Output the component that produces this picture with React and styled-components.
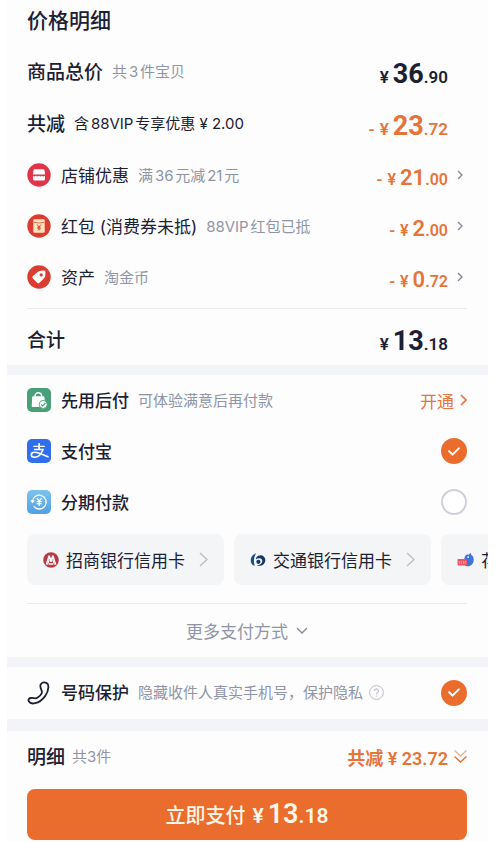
import React, { useState } from 'react';
import styled, { createGlobalStyle } from 'styled-components';

const colors = {
	text: '#1b2032',
	muted: '#8f95a6',
	orange: '#e5743a',
	accent: '#ea6d2d',
	band: '#f2f4f7',
	line: '#e9eaee',
};

const GlobalStyle = createGlobalStyle`
	*{
		box-sizing: border-box;
	}
	body{
		margin: 0;
		background: #fff;
		color: ${colors.text};
		font-family: Inter, "Noto Sans CJK SC", sans-serif;
		text-autospace: normal;
	}
	button{
		margin: 0;
		padding: 0;
		border: 0;
		background: none;
		color: inherit;
		font: inherit;
		cursor: pointer;
	}
	svg{
		display: block;
		flex: none;
	}
`;

const Sheet = styled.main`
	margin: 0 12px 0 7px;
	padding-bottom: 2px;
	background: #fdfdfe;
`;
const Section = styled.section`
	padding: 0 21px 0 20px;
`;
const Band = styled.div`
	height: ${({ $tall }) => ($tall ? 12 : 10)}px;
	background: ${colors.band};
`;
const Divider = styled.hr`
	height: 1px;
	margin: ${({ $space }) => $space || '0'};
	border: 0;
	background: ${colors.line};
`;
const Title = styled.h1`
	margin: 0;
	padding: 5px 0 9px;
	font-size: 21px;
	line-height: 32px;
	font-weight: 500;
`;
const Row = styled.div`
	display: flex;
	align-items: center;
	height: ${({ $tall }) => ($tall ? 52 : 51)}px;
	padding-bottom: 1px;
	white-space: nowrap;
`;
const Heading = styled.span`
	padding-bottom: 2px;
	font-size: 19px;
	font-weight: 500;
`;
const Name = styled.span`
	margin-left: 10px;
	padding-bottom: 2px;
	font-size: 17px;
	font-weight: ${({ $strong }) => ($strong ? 500 : 400)};
`;
const NameLabel = styled(Name).attrs({ as: 'label' })``;
const Hint = styled.span`
	margin-left: ${({ $close }) => ($close ? 7 : 9)}px;
	padding-bottom: 2px;
	font-size: 15px;
	color: ${({ $dark }) => ($dark ? colors.text : colors.muted)};
	text-autospace: ${({ $close }) => ($close ? 'no-autospace' : 'normal')};
`;
const End = styled.div`
	display: flex;
	align-items: center;
	margin-left: auto;
`;
const Amount = styled.span`
	display: flex;
	align-items: baseline;
	padding-top: 7px;
	color: ${({ $dark }) => ($dark ? colors.text : colors.orange)};
	font-family: Roboto, "Noto Sans CJK SC", sans-serif;
	font-size: ${({ $large }) => ($large ? 17 : 16)}px;
	line-height: 32px;
	font-weight: 600;
	b{
		margin-left: 4px;
		font-size: ${({ $large }) => ($large ? 27 : 22)}px;
		font-weight: ${({ $large }) => ($large ? 700 : 600)};
	}
`;
const Minus = styled.span`
	margin-right: 5px;
`;
const ArrowSlot = styled.span`
	display: flex;
	justify-content: flex-end;
	width: 19px;
	padding-right: 4px;
`;
const ArrowButton = styled(ArrowSlot).attrs({ as: 'button', type: 'button' })``;
const OpenLink = styled.a`
	display: flex;
	align-items: center;
	gap: 6px;
	margin-left: auto;
	color: ${colors.orange};
	font-size: 17px;
	text-decoration: none;
`;
const Tick = styled.span`
	display: grid;
	place-items: center;
	margin-left: auto;
	input{
		grid-area: 1 / 1;
		appearance: none;
		width: 26px;
		height: 26px;
		margin: 0;
		border: 2px solid #cfcfdb;
		border-radius: 50%;
		background: #fff;
	}
	input:checked{
		border-color: ${colors.accent};
		background: ${colors.accent};
	}
	svg{
		grid-area: 1 / 1;
		z-index: 1;
		pointer-events: none;
	}
`;
const Banks = styled.div`
	display: flex;
	gap: 10px;
	margin-top: 6px;
	padding-left: 20px;
	overflow-x: auto;
	scrollbar-width: none;
`;
const Bank = styled.button`
	display: flex;
	flex: none;
	align-items: center;
	height: 51px;
	padding: 0 16px;
	border-radius: 8px;
	background: #f3f5f7;
	font-size: 17px;
	white-space: nowrap;
	span{
		margin: 0 14px 0 7px;
	}
`;
const More = styled.button`
	display: flex;
	align-items: center;
	justify-content: center;
	gap: 8px;
	width: 100%;
	height: 53px;
	color: ${colors.muted};
	font-size: 17px;
`;
const HelpButton = styled.button`
	margin-left: 6px;
`;
const Saved = styled.button`
	display: flex;
	align-items: center;
	gap: 6px;
	margin-left: auto;
	color: ${colors.orange};
	font-family: Roboto, "Noto Sans CJK SC", sans-serif;
	font-size: 18px;
	font-weight: 600;
`;
const PayButton = styled.button`
	display: flex;
	align-items: baseline;
	justify-content: center;
	width: 100%;
	height: 51px;
	margin-top: 6px;
	border-radius: 8px;
	background: ${colors.accent};
	color: #fff6e6;
	font-size: 20px;
	line-height: 51px;
	font-weight: 500;
`;
const PayAmount = styled.span`
	margin-left: 7px;
	font-family: Roboto, sans-serif;
	font-size: 21px;
	font-weight: 600;
	b{
		margin-left: 4px;
		font-size: 27px;
		font-weight: 600;
	}
`;

const Chevron = ({ width = 6, height = 10, stroke = '#858a99', weight = 1.4 }) => (
	<svg width={width} height={height} viewBox={`0 0 ${width} ${height}`} fill="none" stroke={stroke} strokeWidth={weight}>
		<path d={`M1 1L${width - 1} ${height / 2}L1 ${height - 1}`} />
	</svg>
);
const DownIcon = () => (
	<svg width="12" height="7" viewBox="0 0 12 7" fill="none" stroke="#858b9b" strokeWidth="1.4">
		<path d="M1 1l5 5 5-5" />
	</svg>
);
const DoubleDownIcon = () => (
	<svg width="13" height="15" viewBox="0 0 13 15" fill="none" stroke={colors.orange} strokeWidth="1.5">
		<path d="M.5 1.5l6 5.5 6-5.5" opacity=".55" />
		<path d="M.5 7.5l6 5.5 6-5.5" />
	</svg>
);
const ShopIcon = () => (
	<svg width="24" height="24" viewBox="0 0 24 24">
		<circle cx="12" cy="12" r="11.7" fill="#e03549" />
		<path d="M8 6.200h8a1.600 1.600 0 0 1 1.600 1.400l.4 3.900H6l.4-3.900A1.600 1.600 0 0 1 8 6.200z" fill="#fff" />
		<path d="M6 12.800q1.500 1.400 3 0 1.500 1.400 3 0 1.500 1.400 3 0 1.500 1.400 3 0V16a1.500 1.500 0 0 1-1.500 1.500h-9A1.500 1.500 0 0 1 6 16z" fill="#fff" />
	</svg>
);
const PacketIcon = () => (
	<svg width="24" height="24" viewBox="0 0 24 24">
		<circle cx="12" cy="12" r="11.7" fill="#dc3d33" />
		<rect x="6.300" y="5.300" width="11.400" height="13.400" rx="1.200" fill="#fde3bd" />
		<path d="M6.300 8.200q5.700 1.600 11.400 0" fill="none" stroke="#dc6a45" strokeWidth=".9" />
		<path d="M10 10.500l2 2.500 2-2.500M12 13v3.500M10.300 13.300h3.400M10.300 14.900h3.400" fill="none" stroke="#d9452f" strokeWidth="1" />
	</svg>
);
const TagIcon = () => (
	<svg width="24" height="24" viewBox="0 0 24 24">
		<circle cx="12" cy="12" r="11.7" fill="#dc3d33" />
		<path d="M12.600 5.900l4.200-.4a1.600 1.600 0 0 1 1.700 1.700l-.4 4.300a2 2 0 0 1-.6 1.200l-5 5a1.600 1.600 0 0 1-2.300 0l-4.300-4.300a1.600 1.600 0 0 1 0-2.300l5.500-4.600a2 2 0 0 1 1.200-.6z" fill="#fff" />
		<circle cx="14.200" cy="9.900" r="1.600" fill="#dc3d33" />
	</svg>
);
const BagIcon = () => (
	<svg width="24" height="24" viewBox="0 0 24 24">
		<rect width="24" height="24" rx="5" fill="#48a078" />
		<path d="M8 8.800V8a3.300 3.300 0 0 1 6.600 0v.8" fill="none" stroke="#fff" strokeWidth="1.400" />
		<path d="M6.200 8.200h10.200a1 1 0 0 1 1 .9l.9 8.800a1 1 0 0 1-1 1.100H5.700a1 1 0 0 1-1-1.100l.5-8.800a1 1 0 0 1 1-.9z" fill="#fff" />
		<circle cx="16.200" cy="16.400" r="4" fill="#fff" stroke="#48a078" strokeWidth=".9" />
		<path d="M14.200 16.400l1.500 1.500 2.800-2.900" fill="none" stroke="#48a078" strokeWidth="1.200" />
	</svg>
);
const AlipayIcon = () => (
	<svg width="24" height="24" viewBox="0 0 24 24">
		<rect width="24" height="24" rx="5" fill="#2f6fed" />
		<g fill="none" stroke="#fff" strokeLinecap="round">
			<path d="M12.100 4.800v5.500" strokeWidth="1.700" />
			<path d="M6.800 7.300h10.700M7.400 10.500h8.600" strokeWidth="1.300" />
			<path d="M16 10.500c-1.500 4.200-4.600 7.700-8.500 7.700-2 0-3.200-1-3.200-2.500 0-1.600 1.500-2.500 3.300-2.500 3.700 0 8.600 2.600 13.400 4.600" strokeWidth="1.600" />
		</g>
	</svg>
);
const InstallmentIcon = () => (
	<svg width="24" height="24" viewBox="0 0 24 24">
		<defs>
			<linearGradient id="installment" x1="0" y1="0" x2="0" y2="1">
				<stop offset="0" stopColor="#7cc3ec" />
				<stop offset="1" stopColor="#519fe3" />
			</linearGradient>
		</defs>
		<rect width="24" height="24" rx="5" fill="url(#installment)" />
		<path d="M5.400 11.500a6.900 6.900 0 1 1 1.500 4.900" fill="none" stroke="#fff" strokeWidth="1.400" />
		<path d="M3.200 10.200l2.200 3.100 2.500-2.700z" fill="#fff" />
		<path d="M9.900 8.200l2.300 3 2.300-3M12.200 11.200v4.900M9.700 11.600h5M9.700 13.700h5" fill="none" stroke="#fff" strokeWidth="1.300" />
	</svg>
);
const PhoneIcon = () => (
	<svg width="24" height="24" viewBox="0 0 24 24" fill="none" stroke={colors.text} strokeWidth="1.800" strokeLinejoin="round">
		<path d="M13.800 3.200C15 1.600 17.500 1 19.400 1.900c1.500.7 2.100 2.300 2 4.300-.2 3.200-1.300 6.200-3.300 8.900-2.500 3.400-6 6.200-10 7.100-2.600.6-5.300-.1-6.300-1.900-.8-1.500.1-2.900 1.800-3.300 1.200-.3 2.400-.1 3.500.2 1.300.3 2.300.2 3.600-.6 1.600-1 3-2.400 3.800-4 .6-1.200.5-2.200 0-3.400-.9-2-1.900-4.100-.7-6z" />
	</svg>
);
const CmbIcon = () => (
	<svg width="16" height="16" viewBox="0 0 16 16">
		<circle cx="8" cy="8" r="7.800" fill="#b83a46" />
		<path d="M3.800 12.800H2.600L5.400 3.500h1.500L8 6.700l1.100-3.200h1.500l2.800 9.300h-1.200L10 6.500 8.600 10H7.400L6 6.500zM5.600 12.700l.5-1.400h3.800l.5 1.400z" fill="#fff" />
		<path d="M6 6.500L3.800 12.600h1.300l1.500-4.200zM10 6.500l2.200 6.100h-1.300L9.400 8.400z" fill="#fff" />
	</svg>
);
const BocomIcon = () => (
	<svg width="16" height="16" viewBox="0 0 16 16">
		<path d="M6.200 1.200C2.300 2.600.3 5.800.8 9.500c.3 2.300 1.600 3.900 4 4.300C3.300 10 3.700 5.300 6.200 1.200z" fill="#1d4f86" />
		<path d="M6.300 5.600C8 3.200 11.500 2.600 13.700 4.400c2.400 2 2 6-.4 8-1.900 1.600-4.800 1.900-6.700.8 3 .1 5.400-1.400 5.700-3.800.2-1.900-1.100-3.100-2.800-3.200-1.300-.1-2.600.4-3.700 1.400z" fill="#17376b" />
		<circle cx="8.400" cy="9.800" r="2.100" fill="#17376b" />
	</svg>
);
const HuabeiIcon = () => (
	<svg width="17" height="16" viewBox="0 0 17 16">
		<path d="M8.300 3.800c1.200-1.400 2.500-1.600 3.500-1.100L13.400.8l.8 2c1.700 1 2.600 2.700 2.500 5.100-.1 3.700-2.700 6.300-5.900 6.300-2.600 0-4.600-1.600-4.600-4.500z" fill="#3f73e0" />
		<circle cx="11.200" cy="5.200" r=".9" fill="#fff" />
		<rect x=".5" y="7" width="9.600" height="6.400" rx=".8" fill="#ec5563" />
		<path d="M2.300 9v2.700M4.300 9v2.700M6.300 9v2.700M8.200 9v2.700" stroke="#f9b5b9" strokeWidth=".8" />
	</svg>
);
const HelpIcon = () => (
	<svg width="15" height="15" viewBox="0 0 15 15" fill="none" stroke="#b9bdc8">
		<circle cx="7.500" cy="7.500" r="6.900" />
		<path d="M5.500 6a2 2 0 1 1 3.100 1.600c-.8.5-1.100.8-1.100 1.600M7.500 10.400v1.200" strokeWidth="1.100" />
	</svg>
);

const Price = ({ whole, cents, minus, dark, large }) => (
	<Amount $dark={dark} $large={large}>
		{minus && <Minus>-</Minus>}
		<span>¥</span>
		<b>{whole}</b>
		<span>.{cents}</span>
	</Amount>
);

const TickInput = ({ checked, ...props }) => (
	<Tick>
		<input checked={checked} {...props} />
		{checked && (
			<svg width="12" height="9" viewBox="0 0 12 9" fill="none" stroke="#fff" strokeWidth="2" strokeLinecap="round" strokeLinejoin="round">
				<path d="M1.200 4.300l3.300 3.300 6.300-6.200" />
			</svg>
		)}
	</Tick>
);

const discounts = [
	{ name: '店铺优惠', hint: '满36元减21元', whole: '21', cents: '00', Icon: ShopIcon },
	{ name: '红包 (消费券未抵)', hint: '88VIP红包已抵', whole: '2', cents: '00', Icon: PacketIcon },
	{ name: '资产', hint: '淘金币', whole: '0', cents: '72', Icon: TagIcon },
];
const methods = [
	{ id: 'alipay', name: '支付宝', Icon: AlipayIcon },
	{ id: 'installment', name: '分期付款', Icon: InstallmentIcon },
];
const banks = [
	{ name: '招商银行信用卡', Icon: CmbIcon },
	{ name: '交通银行信用卡', Icon: BocomIcon },
	{ name: '花呗', Icon: HuabeiIcon },
];

const App = () => {
	const [method, setMethod] = useState('alipay');
	const [protect, setProtect] = useState(true);

	return (
		<>
			<GlobalStyle />
			<Sheet>
				<Section>
					<Title>价格明细</Title>
					<Row $tall>
						<Heading>商品总价</Heading>
						<Hint>共3件宝贝</Hint>
						<End><Price dark large whole="36" cents="90" /><ArrowSlot /></End>
					</Row>
					<Row $tall>
						<Heading>共减</Heading>
						<Hint $dark>含88VIP专享优惠 ¥ 2.00</Hint>
						<End><Price minus large whole="23" cents="72" /><ArrowSlot /></End>
					</Row>
					{discounts.map(({ name, hint, whole, cents, Icon }) => (
						<Row key={name}>
							<Icon />
							<Name>{name}</Name>
							<Hint>{hint}</Hint>
							<End>
								<Price minus whole={whole} cents={cents} />
								<ArrowButton aria-label={name}><Chevron /></ArrowButton>
							</End>
						</Row>
					))}
					<Divider $space="5px 0" />
					<Row>
						<Heading>合计</Heading>
						<End><Price dark large whole="13" cents="18" /><ArrowSlot /></End>
					</Row>
				</Section>
				<Band />
				<Section>
					<Row>
						<BagIcon />
						<Name $strong>先用后付</Name>
						<Hint>可体验满意后再付款</Hint>
						<OpenLink href="#open">开通<Chevron width={7} height={12} stroke={colors.orange} weight={1.7} /></OpenLink>
					</Row>
					{methods.map(({ id, name, Icon }) => (
						<Row key={id}>
							<Icon />
							<NameLabel $strong htmlFor={id}>{name}</NameLabel>
							<TickInput type="radio" name="method" id={id} checked={method === id} onChange={() => setMethod(id)} />
						</Row>
					))}
				</Section>
				<Banks>
					{banks.map(({ name, Icon }) => (
						<Bank key={name} type="button">
							<Icon />
							<span>{name}</span>
							<Chevron width={9} height={15} stroke="#bcc0c9" weight={1.5} />
						</Bank>
					))}
				</Banks>
				<Section>
					<Divider $space="18px 0 0" />
					<More type="button">更多支付方式<DownIcon /></More>
				</Section>
				<Band />
				<Section>
					<Row $tall>
						<PhoneIcon />
						<NameLabel $strong htmlFor="protect">号码保护</NameLabel>
						<Hint>隐藏收件人真实手机号，保护隐私</Hint>
						<HelpButton type="button" aria-label="号码保护"><HelpIcon /></HelpButton>
						<TickInput type="checkbox" id="protect" checked={protect} onChange={() => setProtect(!protect)} />
					</Row>
				</Section>
				<Band $tall />
				<Section>
					<Row $tall>
						<Heading>明细</Heading>
						<Hint $close>共3件</Hint>
						<Saved type="button">共减 ¥ 23.72<DoubleDownIcon /></Saved>
					</Row>
					<PayButton type="button">
						立即支付
						<PayAmount>¥<b>13</b>.18</PayAmount>
					</PayButton>
				</Section>
			</Sheet>
		</>
	);
};

export default App;
